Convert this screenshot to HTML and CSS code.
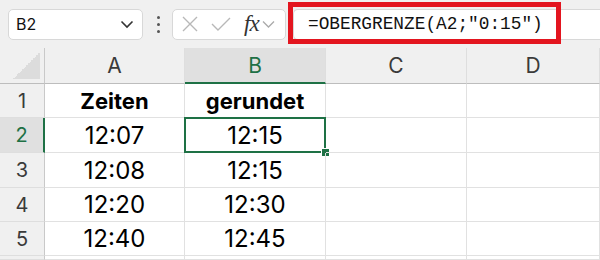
FILE: index.html
```html
<!DOCTYPE html>
<html lang="de">
<head>
  <meta charset="UTF-8">
  <title>OBERGRENZE</title>
  <link rel="stylesheet" href="styles.css">
</head>
<body>
  <div class="toolbar">
    <div class="namebox">
      <span>B2</span>
      <svg class="chev" width="14" height="9" viewBox="0 0 14 9"><path d="M1.5 1.5 L7 7 L12.5 1.5" fill="none" stroke="#333" stroke-width="1.6"/></svg>
    </div>
    <div class="dots"><i></i><i></i><i></i></div>
    <div class="fxbox">
      <svg width="20" height="20" viewBox="0 0 20 20"><path d="M3 3 L17 17 M17 3 L3 17" fill="none" stroke="#b8b8b8" stroke-width="1.4"/></svg>
      <svg width="22" height="20" viewBox="0 0 22 20"><path d="M2 10 L8 16 L20 4" fill="none" stroke="#b8b8b8" stroke-width="1.4"/></svg>
      <span class="fx">fx</span>
      <svg width="13" height="9" viewBox="0 0 13 9"><path d="M1 1.5 L6.5 7 L12 1.5" fill="none" stroke="#aaa" stroke-width="1.3"/></svg>
    </div>
    <div class="formula">
      <span>=OBERGRENZE(A2;"0:15")</span>
      <div class="mark"></div>
    </div>
  </div>

  <div class="sheet">
    <div class="corner"><div class="tri"></div></div>
    <div class="colhead">A</div>
    <div class="colhead sel">B</div>
    <div class="colhead">C</div>
    <div class="colhead">D</div>

    <div class="rowhead">1</div>
    <div class="cell bold">Zeiten</div>
    <div class="cell bold">gerundet</div>
    <div class="cell"></div>
    <div class="cell"></div>

    <div class="rowhead sel">2</div>
    <div class="cell">12:07</div>
    <div class="cell active">12:15</div>
    <div class="cell"></div>
    <div class="cell"></div>

    <div class="rowhead">3</div>
    <div class="cell">12:08</div>
    <div class="cell">12:15</div>
    <div class="cell"></div>
    <div class="cell"></div>

    <div class="rowhead">4</div>
    <div class="cell">12:20</div>
    <div class="cell">12:30</div>
    <div class="cell"></div>
    <div class="cell"></div>

    <div class="rowhead">5</div>
    <div class="cell">12:40</div>
    <div class="cell">12:45</div>
    <div class="cell"></div>
    <div class="cell"></div>

    <div class="rowhead"></div>
    <div class="cell"></div>
    <div class="cell"></div>
    <div class="cell"></div>
    <div class="cell"></div>
  </div>
</body>
</html>
```

FILE: styles.css
```css
* {
  box-sizing: border-box;
}

html, body {
  margin: 0;
  width: 600px;
  height: 260px;
  overflow: hidden;
  background: white;
  font-family: "Inter", "Liberation Sans", sans-serif;
}

.toolbar {
  display: flex;
  align-items: center;
  height: 48px;
  padding: 0 0 0 8px;
  background: #f0f0f0;
}

.namebox {
  display: flex;
  align-items: center;
  justify-content: space-between;
  width: 135px;
  height: 31px;
  padding: 0 8px 0 7px;
  background: white;
  border: 1px solid #d8d8d8;
  border-radius: 5px;
  font-size: 16px;
  color: #111;
}

.dots {
  display: flex;
  flex-direction: column;
  gap: 4px;
  margin: 0 12px 0 14px;
}

.dots i {
  display: block;
  width: 3px;
  height: 3px;
  border-radius: 50%;
  background: #555;
}

.fxbox {
  display: flex;
  align-items: center;
  gap: 10px;
  width: 114px;
  height: 31px;
  padding: 0 4px 0 7px;
  background: white;
  border: 1px solid #d8d8d8;
  border-radius: 5px;
}

.fx {
  font-family: "Liberation Serif", serif;
  font-style: italic;
  font-size: 23px;
  color: #333;
  margin-left: 2px;
  margin-right: -7px;
  letter-spacing: -1px;
}

.formula {
  position: relative;
  flex: 1;
  display: flex;
  align-items: center;
  height: 31px;
  margin-left: 7px;
  padding-left: 14px;
  background: white;
  border: 1px solid #d8d8d8;
  border-right: 0;
  border-radius: 5px 0 0 5px;
  font-family: "Liberation Mono", monospace;
  font-size: 17.8px;
  color: #111;
}

.mark {
  position: absolute;
  left: -6px;
  top: -8px;
  width: 273px;
  height: 42px;
  border: 5px solid #e3151f;
}

.sheet {
  display: grid;
  grid-template-columns: 45px 140px 141px 141px 1fr;
  grid-template-rows: 36px 34px 35px 35px 34px 34px 1fr;
  height: 212px;
}

.corner {
  display: flex;
  align-items: flex-end;
  justify-content: flex-end;
  padding: 0 4px 4px 0;
  background: #f0f0f0;
  border-right: 1px solid #c9c9c9;
  border-bottom: 1px solid #bdbdbd;
}

.tri {
  width: 27px;
  height: 27px;
  background: linear-gradient(to top left, #dcdcdc 50%, transparent 50%);
}

.colhead {
  display: flex;
  align-items: center;
  justify-content: center;
  background: #f0f0f0;
  border-right: 1px solid #dedede;
  border-bottom: 1px solid #bdbdbd;
  font-size: 21px;
  color: #3a3a3a;
}

.colhead.sel {
  background: #e0e0e0;
  color: #1e7145;
  border-bottom: 2px solid #1e7145;
}

.rowhead {
  display: flex;
  align-items: center;
  justify-content: center;
  background: #f0f0f0;
  border-right: 1px solid #c9c9c9;
  border-bottom: 1px solid #dedede;
  font-size: 20px;
  color: #3a3a3a;
}

.rowhead.sel {
  background: #e0e0e0;
  color: #1e7145;
  border-right: 2px solid #1e7145;
}

.cell {
  position: relative;
  display: flex;
  align-items: center;
  justify-content: center;
  border-right: 1px solid #e1e1e1;
  border-bottom: 1px solid #e1e1e1;
  font-size: 24px;
  color: #000;
}

.cell.bold {
  font-size: 22px;
  font-weight: 700;
}

.cell.active::before {
  content: "";
  position: absolute;
  left: -1px;
  top: -1px;
  right: -1px;
  bottom: -1px;
  border: 2px solid #1e7145;
}

.cell.active::after {
  content: "";
  position: absolute;
  right: -5px;
  bottom: -5px;
  width: 7px;
  height: 7px;
  background: #1e7145;
  border: 1px solid white;
}
```
